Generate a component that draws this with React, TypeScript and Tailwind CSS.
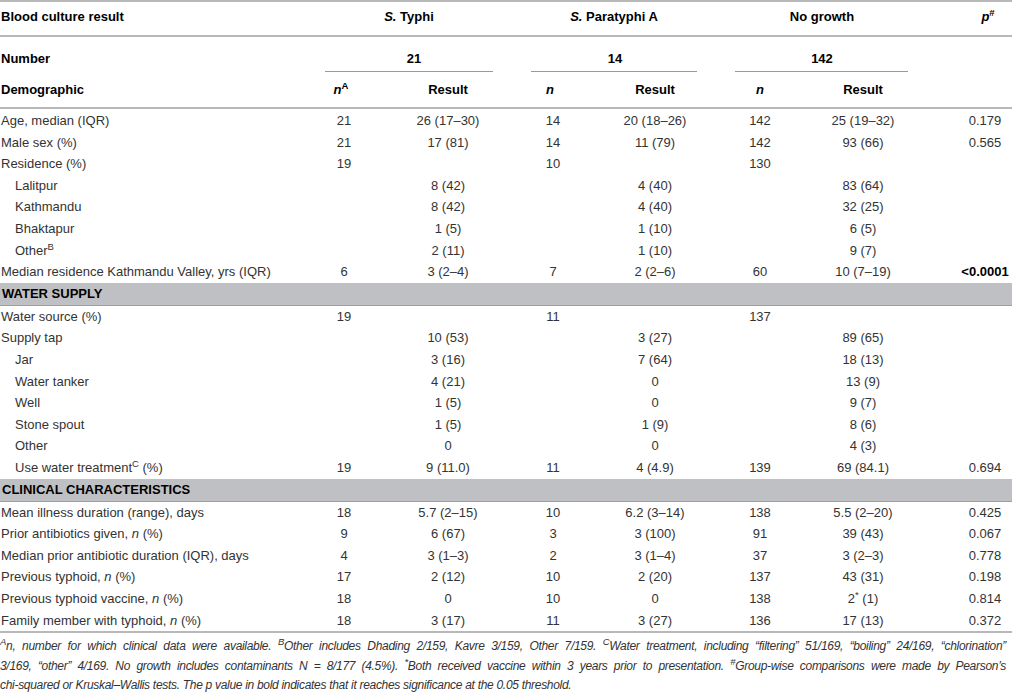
import React from 'react';

type Cell = React.ReactNode;

interface DataRow {
  kind: 'row';
  label: React.ReactNode;
  indent?: boolean;
  cells: Cell[];
  boldP?: boolean;
}

interface BandRow {
  kind: 'band';
  label: string;
}

type Row = DataRow | BandRow;

const Sup = ({ children }: { children: React.ReactNode }) => (
  <sup className="text-[9.5px] relative -top-[5px] align-baseline">{children}</sup>
);

const rows: Row[] = [
  { kind: 'row', label: 'Age, median (IQR)', cells: ['21', '26 (17–30)', '14', '20 (18–26)', '142', '25 (19–32)', '0.179'] },
  { kind: 'row', label: 'Male sex (%)', cells: ['21', '17 (81)', '14', '11 (79)', '142', '93 (66)', '0.565'] },
  { kind: 'row', label: 'Residence (%)', cells: ['19', '', '10', '', '130', '', ''] },
  { kind: 'row', label: 'Lalitpur', indent: true, cells: ['', '8 (42)', '', '4 (40)', '', '83 (64)', ''] },
  { kind: 'row', label: 'Kathmandu', indent: true, cells: ['', '8 (42)', '', '4 (40)', '', '32 (25)', ''] },
  { kind: 'row', label: 'Bhaktapur', indent: true, cells: ['', '1 (5)', '', '1 (10)', '', '6 (5)', ''] },
  {
    kind: 'row',
    label: <>Other<Sup>B</Sup></>,
    indent: true,
    cells: ['', '2 (11)', '', '1 (10)', '', '9 (7)', ''],
  },
  {
    kind: 'row',
    label: 'Median residence Kathmandu Valley, yrs (IQR)',
    cells: ['6', '3 (2–4)', '7', '2 (2–6)', '60', '10 (7–19)', '<0.0001'],
    boldP: true,
  },
  { kind: 'band', label: 'WATER SUPPLY' },
  { kind: 'row', label: 'Water source (%)', cells: ['19', '', '11', '', '137', '', ''] },
  { kind: 'row', label: 'Supply tap', cells: ['', '10 (53)', '', '3 (27)', '', '89 (65)', ''] },
  { kind: 'row', label: 'Jar', indent: true, cells: ['', '3 (16)', '', '7 (64)', '', '18 (13)', ''] },
  { kind: 'row', label: 'Water tanker', indent: true, cells: ['', '4 (21)', '', '0', '', '13 (9)', ''] },
  { kind: 'row', label: 'Well', indent: true, cells: ['', '1 (5)', '', '0', '', '9 (7)', ''] },
  { kind: 'row', label: 'Stone spout', indent: true, cells: ['', '1 (5)', '', '1 (9)', '', '8 (6)', ''] },
  { kind: 'row', label: 'Other', indent: true, cells: ['', '0', '', '0', '', '4 (3)', ''] },
  {
    kind: 'row',
    label: <>Use water treatment<Sup>C</Sup> (%)</>,
    indent: true,
    cells: ['19', '9 (11.0)', '11', '4 (4.9)', '139', '69 (84.1)', '0.694'],
  },
  { kind: 'band', label: 'CLINICAL CHARACTERISTICS' },
  { kind: 'row', label: 'Mean illness duration (range), days', cells: ['18', '5.7 (2–15)', '10', '6.2 (3–14)', '138', '5.5 (2–20)', '0.425'] },
  { kind: 'row', label: <>Prior antibiotics given, <i>n</i> (%)</>, cells: ['9', '6 (67)', '3', '3 (100)', '91', '39 (43)', '0.067'] },
  { kind: 'row', label: 'Median prior antibiotic duration (IQR), days', cells: ['4', '3 (1–3)', '2', '3 (1–4)', '37', '3 (2–3)', '0.778'] },
  { kind: 'row', label: <>Previous typhoid, <i>n</i> (%)</>, cells: ['17', '2 (12)', '10', '2 (20)', '137', '43 (31)', '0.198'] },
  {
    kind: 'row',
    label: <>Previous typhoid vaccine, <i>n</i> (%)</>,
    cells: ['18', '0', '10', '0', '138', <>2<Sup>*</Sup> (1)</>, '0.814'],
  },
  { kind: 'row', label: <>Family member with typhoid, <i>n</i> (%)</>, cells: ['18', '3 (17)', '11', '3 (27)', '136', '17 (13)', '0.372'] },
];

const GRID = 'grid grid-cols-[310px_68px_140px_70px_134px_76px_130px_84px]';

function DataLine({ row }: { row: DataRow }) {
  return (
    <div className={`${GRID} h-[21.6px] items-center`}>
      <div className={`whitespace-nowrap ${row.indent ? 'pl-[15px]' : 'pl-[1px]'}`}>{row.label}</div>
      {row.cells.slice(0, 6).map((c, i) => (
        <div key={i} className="text-center whitespace-nowrap">
          {c}
        </div>
      ))}
      <div className={`pl-[30px] text-center whitespace-nowrap ${row.boldP ? 'font-bold text-black' : ''}`}>
        {row.cells[6]}
      </div>
    </div>
  );
}

export default function App() {
  return (
    <div className="w-[1012px] h-[698px] bg-white text-[13px] text-[#333] font-['Liberation_Sans',Arial,sans-serif] overflow-hidden">
      {/* column headers */}
      <div className="h-[2px] bg-[#b8b8b8]" />
      <div className={`${GRID} h-[33px] items-center pb-[4px] font-bold text-black`}>
        <div className="pl-[1px]">Blood culture result</div>
        <div className="col-span-2 text-center pr-[10px]">
          <i>S.</i> Typhi
        </div>
        <div className="col-span-2 text-center pr-[12px]">
          <i>S.</i> Paratyphi A
        </div>
        <div className="col-span-2 text-center pr-[6px]">No growth</div>
        <div className="pl-[36px] text-center">
          <i>p</i>
          <Sup>#</Sup>
        </div>
      </div>
      <div className="h-[2px] bg-[#b8b8b8]" />

      <div className={`${GRID} h-[36px] font-bold text-black`}>
        <div className="pt-[12px] pl-[1px]">Number</div>
        <div className="col-span-2 flex flex-col">
          <div className="h-[34px] pt-[12px] text-center">21</div>
          <div className="ml-[15px] mr-[25px] h-[1px] bg-[#9a9a9a]" />
        </div>
        <div className="col-span-2 flex flex-col">
          <div className="h-[34px] pt-[12px] text-center pr-[10px]">14</div>
          <div className="ml-[13px] mr-[25px] h-[1px] bg-[#9a9a9a]" />
        </div>
        <div className="col-span-2 flex flex-col">
          <div className="h-[34px] pt-[12px] text-center pr-[6px]">142</div>
          <div className="ml-[13px] mr-[20px] h-[1px] bg-[#9a9a9a]" />
        </div>
        <div />
      </div>

      <div className={`${GRID} h-[34px] items-center font-bold text-black`}>
        <div className="pl-[1px]">Demographic</div>
        <div className="text-center pr-[6px]">
          <i>n</i>
          <Sup>A</Sup>
        </div>
        <div className="text-center">Result</div>
        <div className="text-center pr-[6px]">
          <i>n</i>
        </div>
        <div className="text-center">Result</div>
        <div className="text-center">
          <i>n</i>
        </div>
        <div className="text-center">Result</div>
        <div />
      </div>
      <div className="h-[2px] bg-[#b8b8b8]" />

      {/* body */}
      <div className="pt-[1px]">
        {rows.map((r, i) =>
          r.kind === 'band' ? (
            <div
              key={i}
              className="h-[23px] flex items-center pl-[2px] bg-[#bfc0c3] border-b border-[#9d9ea1] font-bold text-black"
            >
              {r.label}
            </div>
          ) : (
            <DataLine key={i} row={r} />
          )
        )}
      </div>
      <div className="h-[2px] bg-[#b8b8b8]" />

      {/* footnotes */}
      <div className="pt-[4px] pr-[6px] italic text-[12px] leading-[19.5px] tracking-[-0.3px] text-[#333]">
        <div className="text-justify [text-align-last:justify]">
          <Sup>A</Sup>n, number for which clinical data were available. <Sup>B</Sup>Other includes Dhading 2/159, Kavre
          3/159, Other 7/159. <Sup>C</Sup>Water treatment, including “filtering” 51/169, “boiling” 24/169,
          “chlorination”
        </div>
        <div className="text-justify [text-align-last:justify]">
          3/169, “other” 4/169. No growth includes contaminants N = 8/177 (4.5%). <Sup>*</Sup>Both received vaccine
          within 3 years prior to presentation. <Sup>#</Sup>Group-wise comparisons were made by Pearson’s
        </div>
        <div className="whitespace-nowrap">
          chi-squared or Kruskal–Wallis tests. The p value in bold indicates that it reaches significance at the 0.05
          threshold.
        </div>
      </div>
    </div>
  );
}
